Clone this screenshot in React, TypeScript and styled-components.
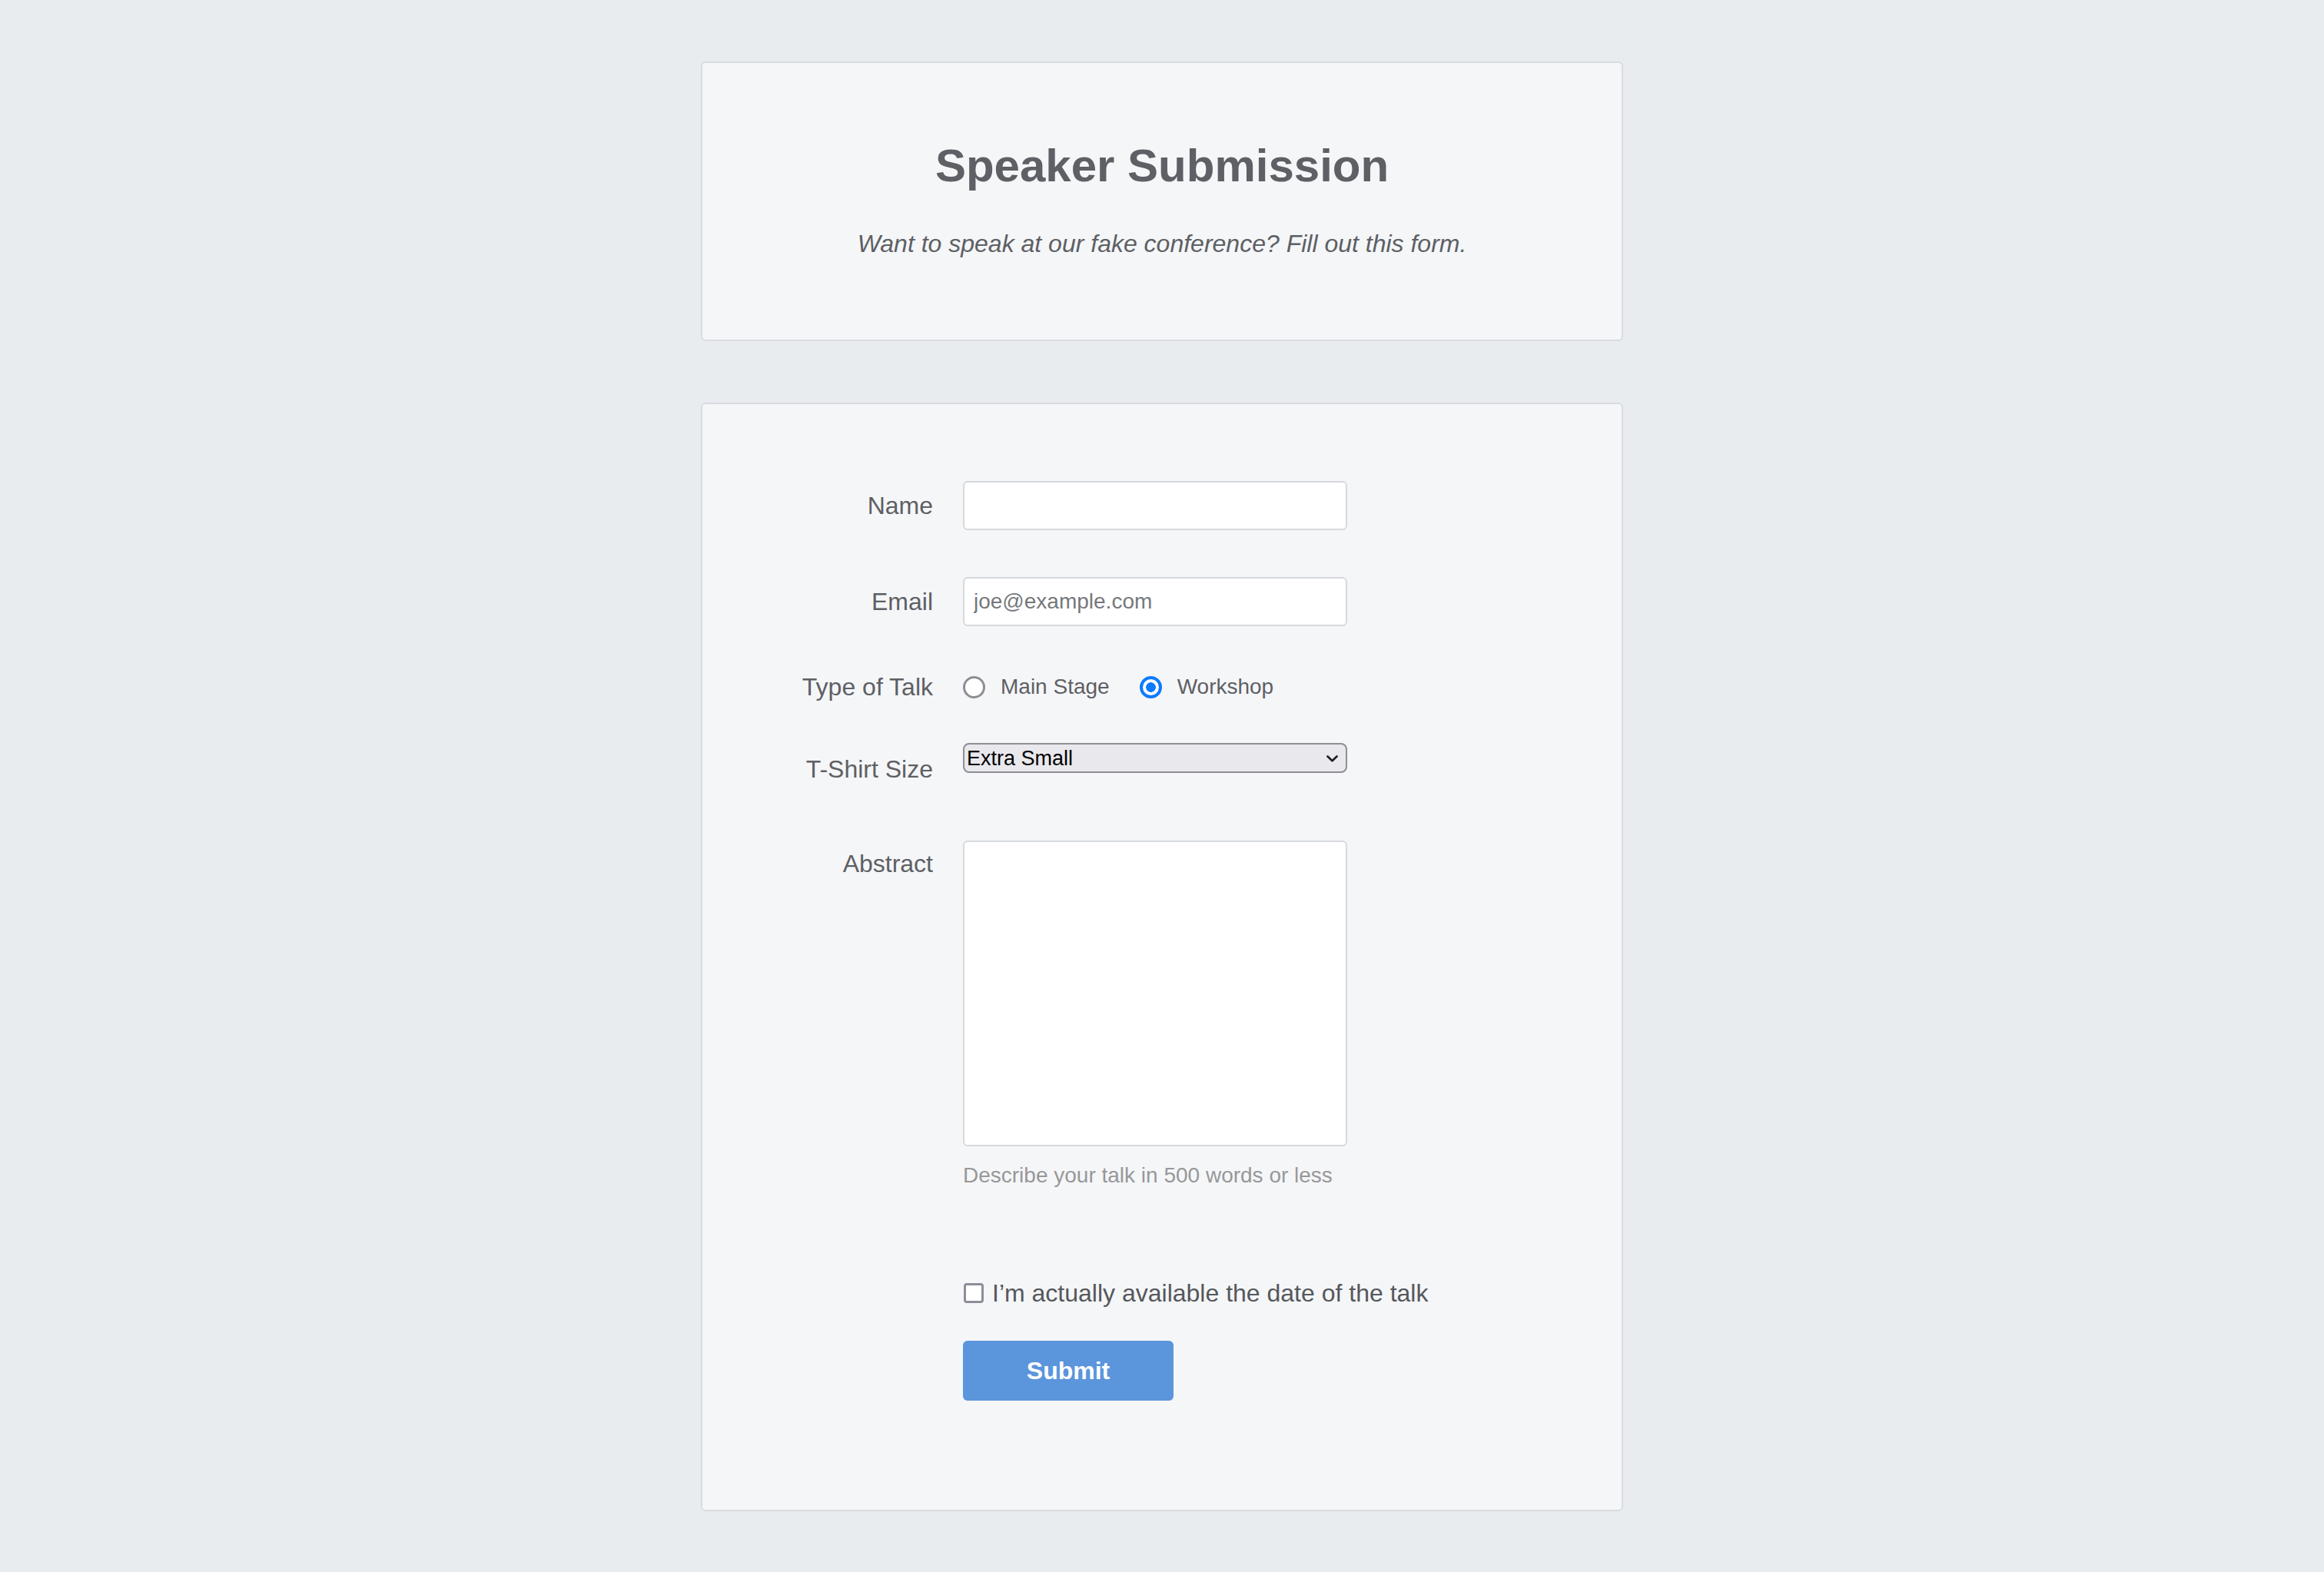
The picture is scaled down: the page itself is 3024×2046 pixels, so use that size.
import React from "react";
import styled, { createGlobalStyle } from "styled-components";

const GlobalStyle = createGlobalStyle`
  html, body {
    margin: 0;
    padding: 0;
    background: #e9ecef;
  }
  body {
    font-family: "Liberation Sans", Arial, Helvetica, sans-serif;
    color: #5d6064;
  }
  * { box-sizing: border-box; }
`;

const Page = styled.main`
  width: 1200px;
  margin: 0 auto;
  padding: 80px 0 82px;
  display: flex;
  flex-direction: column;
  gap: 80px;
`;

const Card = styled.section`
  background: #f5f6f8;
  border: 2px solid #d8dbdf;
  border-radius: 6px;
`;

const HeaderCard = styled(Card)`
  padding: 98px 40px 106px;
  text-align: center;
`;

const Title = styled.h1`
  margin: 0;
  font-size: 60px;
  line-height: 72px;
  font-weight: 700;
  color: #5d6064;
`;

const Subtitle = styled.p`
  margin: 46px 0 0;
  font-size: 32px;
  line-height: 38px;
  font-style: italic;
  color: #5d6064;
`;

const FormCard = styled(Card)`
  padding: 100px 0 142px;
`;

const Form = styled.form`
  display: flex;
  flex-direction: column;
`;

const Row = styled.div<{ $mt?: number; $align?: string }>`
  display: grid;
  grid-template-columns: 300px 1fr;
  column-gap: 39px;
  align-items: ${(p) => p.$align || "center"};
  margin-top: ${(p) => p.$mt || 0}px;
`;

const Label = styled.label<{ $pt?: number }>`
  text-align: right;
  font-size: 32px;
  line-height: 36px;
  color: #5d6064;
  padding-top: ${(p) => p.$pt || 0}px;
`;

const Field = styled.div`
  display: flex;
  flex-direction: column;
  align-items: flex-start;
`;

const TextInput = styled.input`
  width: 500px;
  height: 64px;
  border: 2px solid #d6d9dd;
  border-radius: 6px;
  background: #fff;
  padding: 0 12px;
  font-family: "Liberation Sans", Arial, sans-serif;
  font-size: 28px;
  color: #333;
  outline: none;
  &::placeholder {
    color: #76787c;
  }
`;

const RadioGroup = styled.div`
  display: flex;
  align-items: center;
  height: 36px;
  gap: 39px;
`;

const RadioOption = styled.label`
  display: flex;
  align-items: center;
  gap: 20px;
  font-size: 28px;
  color: #5d6064;
`;

const Radio = styled.input`
  appearance: none;
  margin: 0;
  width: 29px;
  height: 29px;
  border-radius: 50%;
  border: 3px solid #8e8d96;
  background: #fff;
  &:checked {
    border: 4px solid #0b7bff;
    background: radial-gradient(circle, #0b7bff 0 6px, #fff 6.6px);
  }
`;

const SelectWrap = styled.div`
  position: relative;
  width: 500px;
  height: 39px;
`;

const Select = styled.select`
  appearance: none;
  width: 100%;
  height: 100%;
  margin: 0;
  border: 2px solid #8f8e96;
  border-radius: 8px;
  background: #e9e8ed;
  padding: 0 40px 0 3px;
  font-family: "Liberation Sans", Arial, sans-serif;
  font-size: 27px;
  color: #000;
`;

const Chevron = styled.svg`
  position: absolute;
  right: 12px;
  top: 16px;
  width: 15px;
  height: 9px;
  pointer-events: none;
`;

const TextArea = styled.textarea`
  width: 500px;
  height: 398px;
  border: 2px solid #d6d9dd;
  border-radius: 6px;
  background: #fff;
  resize: none;
  outline: none;
`;

const Help = styled.div`
  margin-top: 22px;
  font-size: 28px;
  line-height: 32px;
  color: #979899;
`;

const CheckLabel = styled.label`
  display: flex;
  align-items: center;
  gap: 11px;
  font-size: 32px;
  line-height: 36px;
  color: #55585c;
`;

const Checkbox = styled.input`
  appearance: none;
  margin: 0 0 0 1px;
  width: 26px;
  height: 26px;
  border: 3px solid #8e8d99;
  border-radius: 4px;
  background: #fff;
`;

const SubmitButton = styled.button`
  width: 274px;
  height: 78px;
  border: none;
  border-radius: 6px;
  background: #5b95dc;
  color: #fff;
  font-family: "Liberation Sans", Arial, sans-serif;
  font-weight: 700;
  font-size: 32px;
  cursor: pointer;
`;

export default function App() {
  return (
    <>
      <GlobalStyle />
      <Page>
        <HeaderCard>
          <Title>Speaker Submission</Title>
          <Subtitle>Want to speak at our fake conference? Fill out this form.</Subtitle>
        </HeaderCard>
        <FormCard>
          <Form onSubmit={(e) => e.preventDefault()}>
            <Row>
              <Label htmlFor="name">Name</Label>
              <Field>
                <TextInput id="name" type="text" />
              </Field>
            </Row>
            <Row $mt={61}>
              <Label htmlFor="email">Email</Label>
              <Field>
                <TextInput id="email" type="email" placeholder="joe@example.com" />
              </Field>
            </Row>
            <Row $mt={61}>
              <Label>Type of Talk</Label>
              <RadioGroup>
                <RadioOption>
                  <Radio type="radio" name="talk" value="main" />
                  Main Stage
                </RadioOption>
                <RadioOption>
                  <Radio type="radio" name="talk" value="workshop" defaultChecked />
                  Workshop
                </RadioOption>
              </RadioGroup>
            </Row>
            <Row $mt={55} $align="start">
              <Label htmlFor="size" $pt={16}>T-Shirt Size</Label>
              <Field>
                <SelectWrap>
                  <Select id="size" defaultValue="xs">
                    <option value="xs">Extra Small</option>
                    <option value="s">Small</option>
                    <option value="m">Medium</option>
                    <option value="l">Large</option>
                  </Select>
                  <Chevron viewBox="0 0 15 9">
                    <path d="M1.5 1.5 L7.5 7.2 L13.5 1.5" fill="none" stroke="#1c1c1e" strokeWidth="2.6" strokeLinecap="round" strokeLinejoin="round" />
                  </Chevron>
                </SelectWrap>
              </Field>
            </Row>
            <Row $mt={75} $align="start">
              <Label htmlFor="abstract" $pt={12}>Abstract</Label>
              <Field>
                <TextArea id="abstract" />
                <Help>Describe your talk in 500 words or less</Help>
              </Field>
            </Row>
            <Row $mt={119}>
              <span />
              <CheckLabel>
                <Checkbox type="checkbox" />
                I’m actually available the date of the talk
              </CheckLabel>
            </Row>
            <Row $mt={44}>
              <span />
              <Field>
                <SubmitButton type="submit">Submit</SubmitButton>
              </Field>
            </Row>
          </Form>
        </FormCard>
      </Page>
    </>
  );
}
